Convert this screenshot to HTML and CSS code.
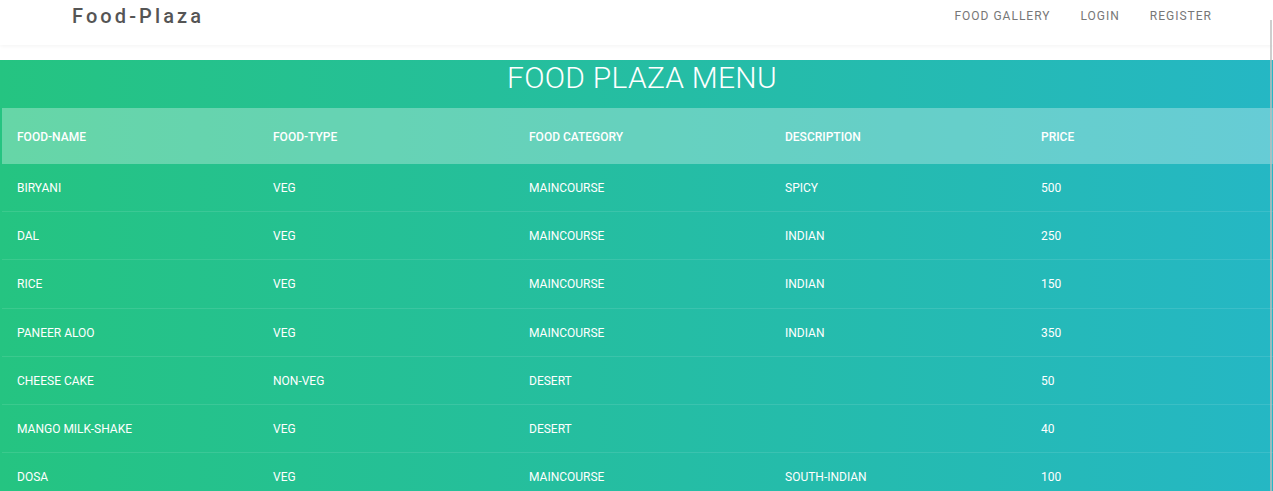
FILE: index.html
```html
<!DOCTYPE html>
<html lang="en">
<head>
<meta charset="utf-8">
<title>Food-Plaza</title>
<link rel="stylesheet" href="styles.css">
</head>
<body>
<header class="navbar">
  <a class="brand" href="#">Food-Plaza</a>
  <nav class="nav-links">
    <a href="#">Food Gallery</a>
    <a href="#">Login</a>
    <a href="#">Register</a>
  </nav>
</header>
<section class="menu">
  <div class="menu-inner">
    <h1 class="menu-title">Food Plaza Menu</h1>
    <table class="menu-table">
      <thead>
        <tr><th>Food-Name</th><th>Food-Type</th><th>Food Category</th><th>Description</th><th>Price</th></tr>
      </thead>
      <tbody>
        <tr><td>Biryani</td><td>Veg</td><td>Maincourse</td><td>Spicy</td><td>500</td></tr>
        <tr><td>Dal</td><td>Veg</td><td>Maincourse</td><td>Indian</td><td>250</td></tr>
        <tr><td>Rice</td><td>Veg</td><td>Maincourse</td><td>Indian</td><td>150</td></tr>
        <tr><td>Paneer Aloo</td><td>Veg</td><td>Maincourse</td><td>Indian</td><td>350</td></tr>
        <tr><td>Cheese Cake</td><td>Non-Veg</td><td>Desert</td><td></td><td>50</td></tr>
        <tr><td>Mango Milk-Shake</td><td>Veg</td><td>Desert</td><td></td><td>40</td></tr>
        <tr><td>Dosa</td><td>Veg</td><td>Maincourse</td><td>South-Indian</td><td>100</td></tr>
      </tbody>
    </table>
  </div>
</section>
<div class="scroll-thumb"></div>
</body>
</html>
```
FILE: styles.css
```css
html, body {
  margin: 0;
  padding: 0;
  background: #fff;
  overflow: hidden;
  font-family: Roboto, "Liberation Sans", sans-serif;
}

.navbar {
  display: flex;
  justify-content: space-between;
  align-items: flex-start;
  height: 45px;
  padding: 0 61px 0 72px;
  box-sizing: border-box;
  background: #fff;
  box-shadow: 0 1px 4px rgba(0, 0, 0, 0.05);
}

.brand {
  font-size: 20px;
  font-weight: 500;
  line-height: 32px;
  letter-spacing: 3.1px;
  color: #555;
  text-decoration: none;
}

.nav-links {
  display: flex;
  gap: 30px;
}

.nav-links a {
  font-size: 12px;
  line-height: 32px;
  letter-spacing: 1px;
  text-transform: uppercase;
  color: #777;
  text-decoration: none;
}

.menu {
  margin-top: 15px;
  min-height: 440px;
  background: linear-gradient(to right, #25c481, #25b7c4);
}

.menu-inner {
  width: 1280px;
  padding: 0 2px;
}

.menu-title {
  margin: 0 0 13px;
  font-size: 30px;
  line-height: 35px;
  font-weight: 300;
  letter-spacing: 0.25px;
  color: #fff;
  text-align: center;
  text-transform: uppercase;
}

.menu-table {
  width: 1280px;
  table-layout: fixed;
  border-collapse: collapse;
}

.menu-table th {
  padding: 21px 15px 19px;
  line-height: 16px;
  font-size: 12px;
  font-weight: 500;
  text-align: left;
  text-transform: uppercase;
  color: #fff;
  background: rgba(255, 255, 255, 0.3);
}

.menu-table td {
  padding: 16px 15px 14px;
  line-height: 17.2px;
  font-size: 12px;
  font-weight: 400;
  text-align: left;
  text-transform: uppercase;
  color: #fff;
  border-bottom: 1px solid rgba(255, 255, 255, 0.1);
}

.scroll-thumb {
  position: fixed;
  top: 20px;
  bottom: 0;
  left: 1270px;
  width: 2px;
  background: rgba(190, 190, 190, 0.75);
}
```
